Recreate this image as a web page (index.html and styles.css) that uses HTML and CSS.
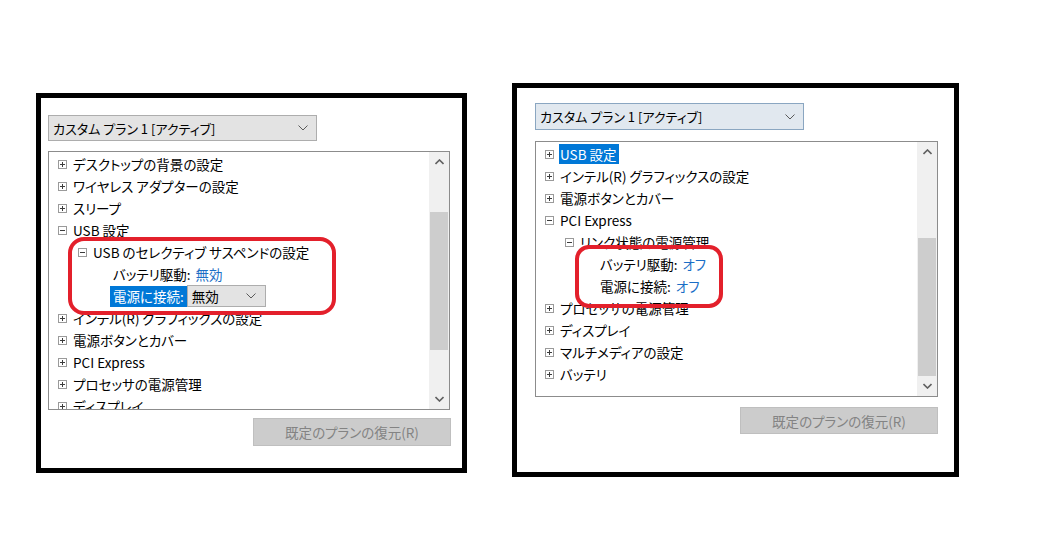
FILE: index.html
```html
<!DOCTYPE html>
<html lang="ja">
  <head>
    <meta charset="UTF-8" />
    <title>電源オプションの詳細設定</title>
    <link rel="stylesheet" href="styles.css">
  </head>
  <body>
    <main class="stage">
      <!-- left capture: USB selective suspend -->
      <section class="shot shot-left">
        <div class="combo">
          <span>カスタム プラン 1 [アクティブ]</span>
          <svg class="chev" width="10" height="6" viewBox="0 0 10 6"><polyline points="0.5,0.5 5,5 9.5,0.5" /></svg>
        </div>
        <div class="tree">
          <ul class="rows">
            <li class="row lv1"><i class="exp plus"></i>デスクトップの背景の設定</li>
            <li class="row lv1"><i class="exp plus"></i>ワイヤレス アダプターの設定</li>
            <li class="row lv1"><i class="exp plus"></i>スリープ</li>
            <li class="row lv1"><i class="exp minus"></i>USB 設定</li>
            <li class="row lv2"><i class="exp minus"></i>USB のセレクティブ サスペンドの設定</li>
            <li class="row lv3">バッテリ駆動:<span class="val">無効</span></li>
            <li class="row lv3 editing">
              <span class="sel">電源に接続:</span>
              <span class="pick">無効
                <svg class="chev" width="10" height="6" viewBox="0 0 10 6"><polyline points="0.5,0.5 5,5 9.5,0.5" /></svg>
              </span>
            </li>
            <li class="row lv1"><i class="exp plus"></i>インテル(R) グラフィックスの設定</li>
            <li class="row lv1"><i class="exp plus"></i>電源ボタンとカバー</li>
            <li class="row lv1"><i class="exp plus"></i>PCI Express</li>
            <li class="row lv1"><i class="exp plus"></i>プロセッサの電源管理</li>
            <li class="row lv1"><i class="exp plus"></i>ディスプレイ</li>
          </ul>
          <div class="scroll">
            <div class="arrow"><svg width="9" height="6" viewBox="0 0 9 6"><polyline points="0.5,5 4.5,1 8.5,5" /></svg></div>
            <div class="track"><div class="thumb"></div></div>
            <div class="arrow"><svg width="9" height="6" viewBox="0 0 9 6"><polyline points="0.5,1 4.5,5 8.5,1" /></svg></div>
          </div>
        </div>
        <div class="actions"><button class="restore" disabled>既定のプランの復元(R)</button></div>
        <div class="mark"></div>
      </section>

      <!-- right capture: PCI Express link state -->
      <section class="shot shot-right">
        <div class="combo hover">
          <span>カスタム プラン 1 [アクティブ]</span>
          <svg class="chev" width="10" height="6" viewBox="0 0 10 6"><polyline points="0.5,0.5 5,5 9.5,0.5" /></svg>
        </div>
        <div class="tree">
          <ul class="rows">
            <li class="row lv1"><i class="exp plus"></i><span class="sel">USB 設定</span></li>
            <li class="row lv1"><i class="exp plus"></i>インテル(R) グラフィックスの設定</li>
            <li class="row lv1"><i class="exp plus"></i>電源ボタンとカバー</li>
            <li class="row lv1"><i class="exp minus"></i>PCI Express</li>
            <li class="row lv2"><i class="exp minus"></i>リンク状態の電源管理</li>
            <li class="row lv3">バッテリ駆動:<span class="val">オフ</span></li>
            <li class="row lv3">電源に接続:<span class="val">オフ</span></li>
            <li class="row lv1"><i class="exp plus"></i>プロセッサの電源管理</li>
            <li class="row lv1"><i class="exp plus"></i>ディスプレイ</li>
            <li class="row lv1"><i class="exp plus"></i>マルチメディアの設定</li>
            <li class="row lv1"><i class="exp plus"></i>バッテリ</li>
          </ul>
          <div class="scroll">
            <div class="arrow"><svg width="9" height="6" viewBox="0 0 9 6"><polyline points="0.5,5 4.5,1 8.5,5" /></svg></div>
            <div class="track"><div class="thumb"></div></div>
            <div class="arrow"><svg width="9" height="6" viewBox="0 0 9 6"><polyline points="0.5,1 4.5,5 8.5,1" /></svg></div>
          </div>
        </div>
        <div class="actions"><button class="restore" disabled>既定のプランの復元(R)</button></div>
        <div class="mark"></div>
      </section>
    </main>
  </body>
</html>
```

FILE: styles.css
```css
* {
  box-sizing: border-box;
}

body {
  margin: 0;
  background: #ffffff;
  color: #000000;
  font-family: "Noto Sans CJK JP", "Noto Sans", sans-serif;
  font-size: 13px;
  font-feature-settings: "palt";
}

.stage {
  display: flex;
  align-items: flex-start;
  gap: 45px;
  padding-left: 36px;
}

.shot {
  position: relative;
  border: 5px solid #000000;
  display: flex;
  flex-direction: column;
}
.shot-left {
  margin-top: 93px;
  width: 431px;
  height: 380px;
  padding: 17px 0 0 7px;
}
.shot-right {
  margin-top: 83px;
  width: 447px;
  height: 394px;
  padding: 15px 0 0 18px;
}

/* plan selector */
.combo {
  width: 269px;
  height: 26px;
  display: flex;
  align-items: center;
  justify-content: space-between;
  padding: 0 8px 0 4px;
  background: #e3e3e3;
  border: 1px solid #adadad;
  line-height: 1;
}
.shot-right .combo {
  height: 27px;
}
.combo.hover {
  background: #e1e8ef;
  border-color: #8aa6c1;
}
.chev polyline {
  fill: none;
  stroke: #5a5a5a;
  stroke-width: 1;
}

/* settings tree */
.tree {
  display: flex;
  width: 402px;
  border: 1px solid #8c8c8c;
  background: #ffffff;
  overflow: hidden;
}
.shot-left .tree {
  margin-top: 10px;
  height: 259px;
}
.shot-right .tree {
  margin-top: 11px;
  width: 403px;
  height: 256px;
}

.rows {
  flex: 1;
  list-style: none;
  margin: 0;
  padding: 1px 0 0 0;
  overflow: hidden;
  font-size: 13.5px;
}

.row {
  display: flex;
  align-items: center;
  height: 22px;
  white-space: nowrap;
}
.lv1 {
  padding-left: 9px;
}
.lv2 {
  padding-left: 29px;
}
.lv3 {
  padding-left: 64px;
}

.exp {
  flex: none;
  width: 9px;
  height: 9px;
  margin-right: 6px;
  border: 1px solid #9a9a9a;
  background-color: #ffffff;
  background-repeat: no-repeat;
}
.exp.plus {
  background-image: linear-gradient(#3c3c3c, #3c3c3c), linear-gradient(#3c3c3c, #3c3c3c);
  background-size: 5px 1px, 1px 5px;
  background-position: 1px 3px, 3px 1px;
}
.exp.minus {
  background-image: linear-gradient(#3c3c3c, #3c3c3c);
  background-size: 5px 1px;
  background-position: 1px 3px;
}

.val {
  margin-left: 5px;
  color: #1a6ec6;
}

.sel {
  background: #0078d7;
  color: #ffffff;
  height: 20px;
  line-height: 20px;
  padding: 0 2px 0 1px;
  margin-left: -1px;
}
.editing {
  padding-left: 61px;
}
.editing .sel {
  height: 21px;
  line-height: 21px;
  padding: 0 3px;
  margin-left: 0;
}
.pick {
  width: 79px;
  height: 22px;
  display: flex;
  align-items: center;
  justify-content: space-between;
  padding: 0 9px 0 4px;
  background: #e3e3e3;
  border: 1px solid #adadad;
}

/* scrollbar */
.scroll {
  flex: none;
  width: 20px;
  display: flex;
  flex-direction: column;
  background: #f0f0f0;
}
.arrow {
  height: 20px;
  display: flex;
  align-items: center;
  justify-content: center;
}
.arrow polyline {
  fill: none;
  stroke: #606060;
  stroke-width: 1.6;
}
.track {
  flex: 1;
}
.thumb {
  height: 138px;
  margin: 0 1px;
  background: #cdcdcd;
}
.shot-left .thumb {
  margin-top: 40px;
}
.shot-right .thumb {
  margin-top: 76px;
}

/* restore button */
.actions {
  display: flex;
  justify-content: flex-end;
  width: 403px;
}
.shot-left .actions {
  margin-top: 8px;
}
.shot-right .actions {
  margin-top: 10px;
}
.restore {
  width: 198px;
  height: 28px;
  border: 1px solid #bfbfbf;
  background: #cccccc;
  color: #838383;
  font: inherit;
  font-size: 13.5px;
}
.shot-right .restore {
  height: 27px;
}

/* red annotation marks drawn over the captures */
.mark {
  position: absolute;
  border: 4px solid #e3202b;
  border-radius: 16px;
}
.shot-left .mark {
  left: 27px;
  top: 139px;
  width: 268px;
  height: 78px;
}
.shot-right .mark {
  left: 58px;
  top: 157px;
  width: 148px;
  height: 63px;
  border-radius: 14px;
}
```
